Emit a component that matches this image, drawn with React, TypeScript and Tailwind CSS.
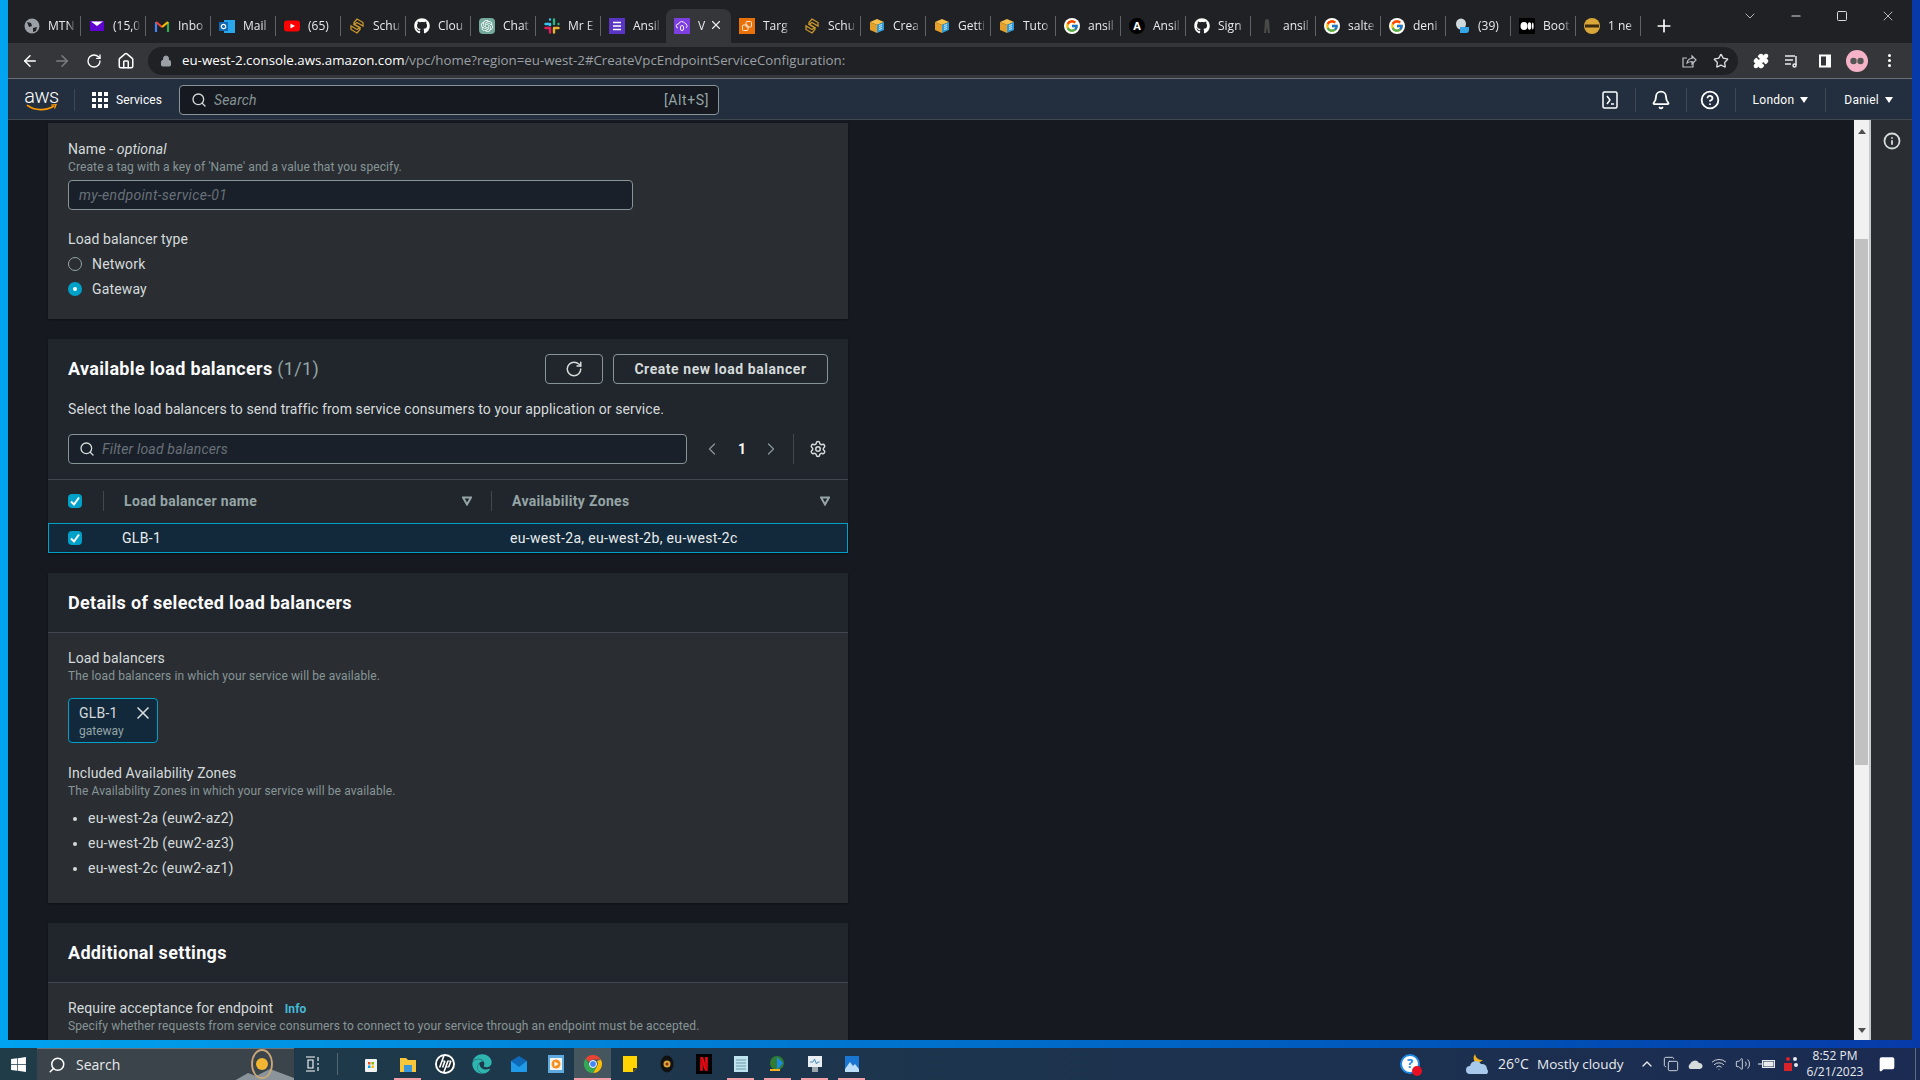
import {
  ArrowLeft,
  ArrowRight,
  Bell,
  ChevronDown,
  ChevronLeft,
  ChevronRight,
  ChevronUp,
  CircleHelp,
  Copy,
  House,
  Info,
  Lock,
  MessageSquare,
  Minus,
  Plus,
  Puzzle,
  RotateCw,
  Search,
  Settings,
  Square,
  Star,
  Volume2,
  Wifi,
  X,
} from 'lucide-react';
import { FaGithub, FaWindows, FaEdge } from 'react-icons/fa';
import { FcGoogle } from 'react-icons/fc';
import { SiHp, SiNetflix, SiOpenai } from 'react-icons/si';

const Schu = () => (
  <svg viewBox="0 0 16 16" className="w-4 h-4" fill="none" stroke="#c8962e" strokeWidth="1.3">
    <path d="M8 1 14 4.500V8L8 4.500 5 6.500 11 10V11.500L8 15 2 11.500V8L8 11.500 11 9.500 5 6V4.500Z" />
  </svg>
);

const Cube = () => (
  <svg viewBox="0 0 16 16" className="w-4 h-4">
    <path d="M1 4 8 1l7 3-7 3z" fill="#f7c04a" />
    <path d="M1 4l7 3v8l-7-3z" fill="#e5a02b" />
    <path d="M8 7l7-3v8l-7 3z" fill="#2f9bd9" />
    <path d="M10 7.500l3-1M10 9.500l3-1M10 11.500l3-1" stroke="#fff" strokeWidth="0.8" />
  </svg>
);

const Google = () => (
  <span className="w-4 h-4 rounded-full bg-white flex items-center justify-center">
    <FcGoogle className="w-3.5 h-3.5" />
  </span>
);

const Github = () => <FaGithub className="w-4 h-4 text-white" />;

const tabs = [
  {
    label: 'MTN',
    icon: (
      <svg viewBox="0 0 16 16" className="w-4 h-4">
        <circle cx="8" cy="8" r="7.500" fill="#9aa0a6" />
        <path d="M3 4l4 1 1 3-3 1zM9 10l4-1-1 4-3 1z" fill="#202124" />
      </svg>
    ),
  },
  {
    label: '(15,0',
    icon: (
      <svg viewBox="0 0 16 16" className="w-4 h-4">
        <rect x="1" y="3" width="14" height="10" fill="#5f01d1" />
        <path d="M2 3.500h12L8 8z" fill="#fff" />
      </svg>
    ),
  },
  {
    label: 'Inbo',
    icon: (
      <svg viewBox="0 0 16 16" className="w-4 h-4" fill="none" strokeWidth="2.200">
        <path d="M2 14V4" stroke="#4285f4" />
        <path d="M14 14V4" stroke="#34a853" />
        <path d="M2 4l6 5" stroke="#ea4335" />
        <path d="M8 9l6-5" stroke="#fbbc04" />
      </svg>
    ),
  },
  {
    label: 'Mail',
    icon: (
      <svg viewBox="0 0 16 16" className="w-4 h-4">
        <rect x="5" y="2" width="11" height="13" fill="#28a8ea" />
        <rect x="0" y="4" width="9" height="9" fill="#0f67b5" />
        <circle cx="4.500" cy="8.500" r="2.200" fill="none" stroke="#fff" strokeWidth="1.200" />
      </svg>
    ),
  },
  {
    label: '(65)',
    icon: (
      <svg viewBox="0 0 16 16" className="w-4 h-4">
        <rect x="0" y="2.500" width="16" height="11" rx="3" fill="#f00" />
        <path d="M6.500 5.500v5L11 8z" fill="#fff" />
      </svg>
    ),
  },
  { label: 'Schu', icon: <Schu /> },
  { label: 'Clou', icon: <Github /> },
  {
    label: 'Chat',
    icon: (
      <span className="w-4 h-4 rounded bg-[#74aa9c] flex items-center justify-center">
        <SiOpenai className="w-3 h-3 text-white" />
      </span>
    ),
  },
  {
    label: 'Mr E',
    icon: (
      <svg viewBox="0 0 16 16" className="w-4 h-4" strokeWidth="2.400" strokeLinecap="round">
        <path d="M6 7V6.500M6 1.500h0" stroke="#36c5f0" />
        <path d="M1.500 6H6" stroke="#36c5f0" />
        <path d="M10 6V1.500M14.500 6h0" stroke="#2eb67d" />
        <path d="M10 10v4.500M14.500 10H10" stroke="#ecb22e" />
        <path d="M6 10v4.500M1.500 10H6" stroke="#e01e5a" />
      </svg>
    ),
  },
  {
    label: 'Ansil',
    icon: (
      <svg viewBox="0 0 16 16" className="w-4 h-4">
        <rect width="16" height="16" fill="#5a35c4" />
        <path d="M4 4.500h8M4 8h8M4 11.500h8" stroke="#fff" strokeWidth="1.500" />
      </svg>
    ),
  },
  {
    label: 'V',
    active: true,
    icon: (
      <svg viewBox="0 0 16 16" className="w-4 h-4" fill="none">
        <rect width="16" height="16" fill="#7d3fe0" />
        <path d="M4 10a2 2 0 0 1 .5-4 3.500 3.500 0 0 1 6.500-.5 2.500 2.500 0 0 1 1 4.500" stroke="#fff" strokeWidth="0.900" />
        <rect x="6.500" y="7.500" width="3" height="5" rx="1.500" stroke="#fff" strokeWidth="0.900" />
      </svg>
    ),
  },
  {
    label: 'Targ',
    icon: (
      <svg viewBox="0 0 16 16" className="w-4 h-4" fill="none">
        <rect width="16" height="16" fill="#e8710a" />
        <rect x="7" y="3.500" width="5.500" height="5.500" rx="1" stroke="#fff" strokeWidth="0.800" />
        <rect x="3.500" y="7" width="5.500" height="5.500" rx="1" stroke="#fff" strokeWidth="0.800" />
      </svg>
    ),
  },
  { label: 'Schu', icon: <Schu /> },
  { label: 'Crea', icon: <Cube /> },
  { label: 'Getti', icon: <Cube /> },
  { label: 'Tuto', icon: <Cube /> },
  { label: 'ansil', icon: <Google /> },
  {
    label: 'Ansil',
    icon: (
      <span className="w-4 h-4 rounded-full bg-black text-white text-[11px] leading-4 text-center font-bold">A</span>
    ),
  },
  { label: 'Sign', icon: <Github /> },
  {
    label: 'ansil',
    icon: (
      <svg viewBox="0 0 16 16" className="w-4 h-4">
        <path d="M5 15 6 3a2 2 0 0 1 4 0l1 12H9L8 9l-1 6z" fill="#4a4a48" />
      </svg>
    ),
  },
  { label: 'salte', icon: <Google /> },
  { label: 'deni', icon: <Google /> },
  {
    label: '(39)',
    icon: (
      <svg viewBox="0 0 16 16" className="w-4 h-4">
        <ellipse cx="7" cy="6" rx="5" ry="5.500" fill="#cfd8dc" />
        <path d="M6 9h9v3a3 3 0 0 1-3 3H6z" fill="#35a7e8" />
      </svg>
    ),
  },
  {
    label: 'Boot',
    icon: (
      <svg viewBox="0 0 16 16" className="w-4 h-4">
        <rect width="16" height="16" fill="#000" />
        <ellipse cx="5" cy="8" rx="3.500" ry="4" fill="#fff" />
        <ellipse cx="10.500" cy="8" rx="1.800" ry="3.800" fill="#fff" />
        <ellipse cx="13.800" cy="8" rx="0.800" ry="3.400" fill="#fff" />
      </svg>
    ),
  },
  {
    label: '1 ne',
    icon: (
      <svg viewBox="0 0 16 16" className="w-4 h-4">
        <circle cx="8" cy="8" r="8" fill="#d9a63a" />
        <rect x="1" y="6.500" width="14" height="3" fill="#3a2a12" />
      </svg>
    ),
  },
];

const TabStrip = () => (
  <div className="h-[43px] bg-[#202124] flex items-end pl-2 shrink-0">
    {tabs.map((tab, i) => {
      const hideSep = tab.active || tabs[i + 1]?.active || tabs[i - 1]?.active;
      return (
        <div
          key={i}
          className={`relative w-[65px] h-[34px] pl-2 pb-[1px] flex items-center gap-2 shrink-0 ${
            tab.active ? 'bg-[#35363a] rounded-t-lg' : ''
          }`}
        >
          <span className="w-4 h-4 shrink-0 flex items-center justify-center">{tab.icon}</span>
          <span className="w-7 overflow-hidden whitespace-nowrap text-xs text-[#e8eaed] [mask-image:linear-gradient(to_right,black_70%,transparent)]">
            {tab.label}
          </span>
          {tab.active && <X className="absolute right-[8px] top-[9px] w-3.5 h-3.5 text-[#e8eaed]" />}
          {!hideSep && !tab.active && <span className="absolute right-0 top-[7px] h-5 w-px bg-[#5f6368]" />}
        </div>
      );
    })}
    <Plus className="w-5 h-5 ml-[13px] mb-[7px] text-white" />
    <div className="ml-auto self-start flex items-center h-[31px] text-[#dadce0]">
      <ChevronDown className="w-4 h-4 mr-[31px]" strokeWidth={1.2} />
      <Minus className="w-3.5 h-3.5 mr-[33px]" />
      <Square className="w-3 h-3 mr-[32px]" />
      <X className="w-4 h-4 mr-[16px]" strokeWidth={1.2} />
    </div>
  </div>
);

const Toolbar = () => (
  <div className="h-[36px] bg-[#35363a] border-b border-[#6b6e73] flex items-center shrink-0 pl-[13px]">
    <ArrowLeft className="w-[18px] h-[18px] text-white" />
    <ArrowRight className="w-[18px] h-[18px] text-[#7c7e82] ml-[14px]" />
    <RotateCw className="w-4 h-4 text-white ml-[15px]" />
    <House className="w-[18px] h-[18px] text-white ml-[15px]" />
    <div className="ml-[13px] w-[1590px] h-[28px] rounded-full bg-[#202124] flex items-center pl-[12px] pr-[9px]">
      <Lock className="w-3 h-3 text-[#9aa0a6]" fill="#9aa0a6" />
      <span className="ml-[10px] text-[13.3px] text-white whitespace-nowrap">
        eu-west-2.console.aws.amazon.com
        <span className="text-[#9aa0a6]">/vpc/home?region=eu-west-2#CreateVpcEndpointServiceConfiguration:</span>
      </span>
      <svg viewBox="0 0 16 16" className="w-4 h-4 ml-auto" fill="none" stroke="#bdc1c6" strokeWidth="1.200">
        <path d="M12 8.500V14H2V5h4" />
        <path d="M6 10c.5-3 2.500-4.500 5-4.500V3l4 4-4 4V8.500c-2 0-3.500.5-5 1.500z" />
      </svg>
      <Star className="w-4 h-4 text-[#dadce0] ml-4" />
    </div>
    <Puzzle className="w-4 h-4 text-white ml-[15px]" fill="#fff" />
    <svg viewBox="0 0 16 16" className="w-4 h-4 ml-[15px]" fill="none" stroke="#e8eaed" strokeWidth="1.500">
      <path d="M1 3h10M1 7h8M1 11h6M12 3v9" />
      <circle cx="10.500" cy="12.500" r="1.500" />
    </svg>
    <svg viewBox="0 0 16 16" className="w-4 h-4 ml-[17px]">
      <rect x="2" y="1.500" width="12" height="13" fill="#fff" />
      <rect x="4" y="3.500" width="5" height="9" fill="#35363a" />
    </svg>
    <svg viewBox="0 0 22 22" className="w-[22px] h-[22px] ml-[13px]">
      <circle cx="11" cy="11" r="11" fill="#f4b3c6" />
      <circle cx="7.500" cy="11" r="3.200" fill="#555" />
      <circle cx="14.500" cy="11" r="3.200" fill="#555" />
    </svg>
    <div className="ml-[20px] flex flex-col gap-[2px]">
      <span className="w-[3px] h-[3px] rounded-full bg-white" />
      <span className="w-[3px] h-[3px] rounded-full bg-white" />
      <span className="w-[3px] h-[3px] rounded-full bg-white" />
    </div>
  </div>
);

const Caret = () => (
  <svg viewBox="0 0 8 6" className="w-2 h-1.5 ml-1.5" fill="#fff">
    <path d="M0 0h8L4 6z" />
  </svg>
);

const AwsNav = () => (
  <div className="h-[41px] bg-[#232f3e] border-b border-[#414750] flex items-center shrink-0 pl-[18px] pt-[1px] text-white">
    <div className="w-[31px] flex flex-col items-center">
      <span className="text-[20px] leading-[16px] font-light -tracking-[0.5px]">aws</span>
      <svg viewBox="0 0 32 8" className="w-[31px] h-2">
        <path d="M1 1c8 6 20 6 28 1" fill="none" stroke="#ff9900" strokeWidth="1.800" />
        <path d="M26 1l5-.5-1.500 4" fill="none" stroke="#ff9900" strokeWidth="1.300" />
      </svg>
    </div>
    <span className="ml-[17px] h-[22px] w-px bg-[#414750]" />
    <div className="ml-[17px] grid grid-cols-3 gap-[2px]">
      {Array.from({ length: 9 }).map((_, i) => (
        <span key={i} className="w-1 h-1 bg-white" />
      ))}
    </div>
    <span className="ml-[8px] text-xs tracking-[0.1px]">Services</span>
    <div className="ml-[17px] w-[540px] h-[30px] rounded-sm bg-[#16191f] border border-[#879596] flex items-center pl-[11px] pr-[9px]">
      <Search className="w-4 h-4 text-[#d5dbdb]" />
      <span className="ml-[7px] text-sm italic text-[#879596] tracking-[0.15px]">Search</span>
      <span className="ml-auto text-sm text-[#95a5a6] tracking-[0.6px]">[Alt+S]</span>
    </div>
    <div className="ml-auto flex items-center h-full">
      <svg viewBox="0 0 16 18" className="w-4 h-[18px]" fill="none" stroke="#fff" strokeWidth="1.500">
        <rect x="1" y="1" width="14" height="16" rx="1.500" />
        <path d="M5 5l3 4-3 4M9 13h3" />
      </svg>
      <span className="ml-[17px] h-[24px] w-px bg-[#414750]" />
      <Bell className="ml-[15px] w-5 h-5" strokeWidth={2.200} />
      <span className="ml-[15px] h-[24px] w-px bg-[#414750]" />
      <CircleHelp className="ml-[13px] w-5 h-5" strokeWidth={2.200} />
      <span className="ml-[15px] h-[24px] w-px bg-[#414750]" />
      <span className="ml-[17px] text-xs tracking-[0.25px]">London</span>
      <Caret />
      <span className="ml-[17px] h-[24px] w-px bg-[#414750]" />
      <span className="ml-[18px] text-xs tracking-[0.25px]">Daniel</span>
      <Caret />
      <span className="w-[19px]" />
    </div>
  </div>
);

const Panel = ({ children, className = '' }: { children: React.ReactNode; className?: string }) => (
  <div className={`w-[800px] bg-[#2a2e33] shadow-[0_1px_2px_rgba(0,0,0,0.4)] shrink-0 ${className}`}>{children}</div>
);

const PanelHeader = ({ title }: { title: string }) => (
  <div className="h-[60px] bg-[#21252c] border-b border-[#414750] px-5 flex items-center">
    <h2 className="text-lg font-bold text-[#fafafa] tracking-[0.32px]">{title}</h2>
  </div>
);

const Label = ({ children }: { children: React.ReactNode }) => (
  <div className="text-sm leading-[22px] text-[#d5dbdb] tracking-[0.1px]">{children}</div>
);

const Hint = ({ children }: { children: React.ReactNode }) => (
  <div className="text-xs leading-[15px] text-[#879596] tracking-[0.11px] whitespace-nowrap">{children}</div>
);

const Radio = ({ label, checked }: { label: string; checked?: boolean }) => (
  <div className="h-5 flex items-center gap-[10px]">
    {checked ? (
      <span className="w-3.5 h-3.5 rounded-full bg-[#00a1c9] flex items-center justify-center">
        <span className="w-1 h-1 rounded-full bg-white" />
      </span>
    ) : (
      <span className="w-3.5 h-3.5 rounded-full border border-[#95a5a6]" />
    )}
    <span className="text-sm text-[#d5dbdb] tracking-[0.15px]">{label}</span>
  </div>
);

const Check = () => (
  <span className="w-3.5 h-3.5 rounded-sm bg-[#00a1c9] flex items-center justify-center shrink-0">
    <svg viewBox="0 0 14 14" className="w-3.5 h-3.5" fill="none" stroke="#fff" strokeWidth="2">
      <path d="M3 7.500 6 10.500 11 3.500" />
    </svg>
  </span>
);

const SortIcon = () => (
  <svg viewBox="0 0 10 10" className="w-2.5 h-2.5" fill="none" stroke="#95a5a6" strokeWidth="2">
    <path d="M1 1.500h8L5 8.500z" />
  </svg>
);

const Scrollbar = () => (
  <div className="w-[17px] bg-[#f1f1f1] border-r-2 border-[#c8c8c8] shrink-0 flex flex-col items-center">
    <svg viewBox="0 0 8 5" className="w-2 h-[5px] mt-[9px] shrink-0" fill="#505050">
      <path d="M4 0l4 5H0z" />
    </svg>
    <div className="w-[13px] h-[526px] mt-[105px] bg-[#c1c1c1] shrink-0" />
    <svg viewBox="0 0 8 5" className="w-2 h-[5px] mt-auto mb-[7px] shrink-0" fill="#505050">
      <path d="M0 0h8L4 5z" />
    </svg>
  </div>
);

const Main = () => (
  <div className="flex-1 flex min-h-0 bg-[#16191f]">
    <div className="flex-1 overflow-hidden pl-10 pt-[3px] flex flex-col gap-5">
      <Panel className="h-[196px] pl-5 pt-[15px]">
        <Label>
          Name - <i>optional</i>
        </Label>
        <Hint>Create a tag with a key of 'Name' and a value that you specify.</Hint>
        <div className="mt-[5px] w-[565px] h-[30px] pb-[1px] bg-[#1a2029] border border-[#879596] rounded-sm flex items-center px-[10px] text-sm italic text-[#687078] tracking-[0.33px]">
          my-endpoint-service-01
        </div>
        <div className="mt-[18px]">
          <Label>Load balancer type</Label>
        </div>
        <div className="mt-[4px] flex flex-col gap-[5px]">
          <Radio label="Network" />
          <Radio label="Gateway" checked />
        </div>
      </Panel>

      <Panel className="bg-[#21252c]">
        <div className="pt-[15px] px-5 flex items-center">
          <h2 className="text-lg font-bold text-[#fafafa] tracking-[0.32px]">
            Available load balancers <span className="font-normal text-[#95a5a6]">(1/1)</span>
          </h2>
          <div className="ml-auto w-[58px] h-[30px] border border-[#879596] rounded-sm flex items-center justify-center">
            <RotateCw className="w-[18px] h-[18px] text-[#d5dbdb]" />
          </div>
          <div className="ml-[10px] w-[215px] h-[30px] border border-[#879596] rounded-sm flex items-center justify-center text-sm font-bold text-[#d5dbdb] tracking-[0.55px]">
            Create new load balancer
          </div>
        </div>
        <div className="mt-[14px] px-5 text-sm leading-[22px] text-[#d5dbdb] tracking-[0.09px]">
          Select the load balancers to send traffic from service consumers to your application or service.
        </div>
        <div className="mt-[14px] px-5 flex items-center h-[30px]">
          <div className="w-[619px] h-full bg-[#1a2029] border border-[#879596] rounded-sm flex items-center pl-[10px]">
            <Search className="w-4 h-4 text-[#d5dbdb]" />
            <span className="ml-[7px] text-sm italic text-[#687078] tracking-[0.17px]">Filter load balancers</span>
          </div>
          <ChevronLeft className="ml-[15px] w-5 h-5 text-[#879596]" strokeWidth={1.500} />
          <span className="ml-[16px] w-2 text-sm font-bold text-[#fafafa]">1</span>
          <ChevronRight className="ml-[15px] w-5 h-5 text-[#879596]" strokeWidth={1.500} />
          <span className="ml-[12px] h-full w-px bg-[#414750]" />
          <Settings className="ml-[15px] w-[18px] h-[18px] text-[#d5dbdb]" />
        </div>
        <div className="mt-[15px] h-[44px] pb-[2px] border-t border-[#414750] flex items-center pl-5 text-sm font-bold text-[#95a5a6] tracking-[0.33px]">
          <Check />
          <span className="ml-[21px] w-px h-5 bg-[#414750]" />
          <span className="ml-5 w-[338px]">Load balancer name</span>
          <SortIcon />
          <span className="ml-[19px] w-px h-5 bg-[#414750]" />
          <span className="ml-5 w-[308px]">Availability Zones</span>
          <SortIcon />
        </div>
        <div className="h-[30px] bg-[#12293b] border border-[#00a1c9] flex items-center pl-[19px] text-sm text-[#eaeded] tracking-[0.32px]">
          <Check />
          <span className="ml-[40px] w-[388px]">GLB-1</span>
          <span>eu-west-2a, eu-west-2b, eu-west-2c</span>
        </div>
      </Panel>

      <Panel className="h-[330px]">
        <PanelHeader title="Details of selected load balancers" />
        <div className="pl-5 pt-[14px]">
          <Label>Load balancers</Label>
          <Hint>The load balancers in which your service will be available.</Hint>
          <div className="mt-[14px] w-[90px] h-[45px] bg-[#12293b] border border-[#00a1c9] rounded-sm pl-[10px] pt-[3px] relative">
            <div className="text-sm leading-[22px] text-[#d5dbdb] tracking-[0.2px]">GLB-1</div>
            <div className="text-xs leading-[15px] text-[#95a5a6]">gateway</div>
            <X className="absolute right-[4px] top-[4px] w-5 h-5 text-[#d5dbdb]" />
          </div>
          <div className="mt-[19px]">
            <Label>Included Availability Zones</Label>
          </div>
          <Hint>The Availability Zones in which your service will be available.</Hint>
          <ul className="mt-[7px] list-disc pl-5 text-sm text-[#d5dbdb] tracking-[0.23px]">
            <li className="h-[25px] leading-[25px]">eu-west-2a (euw2-az2)</li>
            <li className="h-[25px] leading-[25px]">eu-west-2b (euw2-az3)</li>
            <li className="h-[25px] leading-[25px]">eu-west-2c (euw2-az1)</li>
          </ul>
        </div>
      </Panel>

      <Panel className="h-[200px]">
        <PanelHeader title="Additional settings" />
        <div className="pl-5 pt-[14px]">
          <Label>
            Require acceptance for endpoint <b className="ml-2 text-xs text-[#44b9d6]">Info</b>
          </Label>
          <Hint>Specify whether requests from service consumers to connect to your service through an endpoint must be accepted.</Hint>
        </div>
      </Panel>
    </div>
    <Scrollbar />
    <div className="w-[41px] bg-[#2a2e33] shrink-0 flex justify-center pt-3">
      <Info className="w-[18px] h-[18px] text-[#d5dbdb]" strokeWidth={2.400} />
    </div>
  </div>
);

const Chrome = () => (
  <svg viewBox="0 0 20 20" className="w-5 h-5">
    <path d="M10 1a9 9 0 0 1 7.800 4.500H10a4.500 4.500 0 0 0-4 2.500L2.800 4.400A9 9 0 0 1 10 1z" fill="#ea4335" />
    <path d="M17.800 5.500A9 9 0 0 1 10 19l3.900-6.800A4.500 4.500 0 0 0 14 7z" fill="#fbbc04" />
    <path d="M10 19A9 9 0 0 1 2.800 4.400L6 10a4.500 4.500 0 0 0 7.900 2.200z" fill="#34a853" />
    <circle cx="10" cy="10" r="3.500" fill="#4285f4" stroke="#fff" />
  </svg>
);

const taskIcons: { node: React.ReactNode; line?: boolean; active?: boolean }[] = [
  {
    node: (
      <svg viewBox="0 0 20 20" className="w-5 h-5">
        <rect x="4" y="5" width="12" height="13" rx="1" fill="#f3f3f3" />
        <rect x="7" y="8" width="2.500" height="2.500" fill="#f25022" />
        <rect x="10.500" y="8" width="2.500" height="2.500" fill="#7fba00" />
        <rect x="7" y="11.500" width="2.500" height="2.500" fill="#00a4ef" />
        <rect x="10.500" y="11.500" width="2.500" height="2.500" fill="#ffb900" />
      </svg>
    ),
  },
  {
    line: true,
    node: (
      <svg viewBox="0 0 20 20" className="w-5 h-5">
        <path d="M2 4h6l2 2h8v12H2z" fill="#f9c83a" />
        <rect x="6" y="11" width="8" height="7" fill="#3a96dd" />
      </svg>
    ),
  },
  {
    node: (
      <span className="w-5 h-5 rounded-full bg-white flex items-center justify-center">
        <SiHp className="w-4 h-4 text-[#1a2a35]" />
      </span>
    ),
  },
  { node: <FaEdge className="w-5 h-5 text-[#2fb5b0]" /> },
  {
    node: (
      <svg viewBox="0 0 20 20" className="w-5 h-5">
        <rect x="2" y="7" width="16" height="11" fill="#1f9bea" />
        <path d="M2 7l8-5 8 5-8 6z" fill="#0e6ab8" />
      </svg>
    ),
  },
  {
    node: (
      <svg viewBox="0 0 20 20" className="w-5 h-5">
        <rect x="2" y="1" width="16" height="18" fill="#5ea9dd" />
        <rect x="4" y="4" width="12" height="12" fill="#f5f5f5" />
        <circle cx="10" cy="10" r="4.500" fill="#f5901e" />
        <path d="M8.500 7.500v5l4-2.500z" fill="#fff" />
      </svg>
    ),
  },
  { active: true, line: true, node: <Chrome /> },
  {
    node: (
      <svg viewBox="0 0 20 20" className="w-5 h-5">
        <path d="M3 2h14v12l-4 4H3z" fill="#ffd400" />
        <path d="M13 18v-4h4z" fill="#3a3a1a" />
      </svg>
    ),
  },
  {
    node: (
      <svg viewBox="0 0 20 20" className="w-5 h-5">
        <ellipse cx="10" cy="10" rx="6.500" ry="8.500" fill="#111" />
        <circle cx="10" cy="10" r="3.500" fill="#d9a53a" />
        <circle cx="10" cy="10" r="1.500" fill="#8a2a10" />
      </svg>
    ),
  },
  {
    node: (
      <span className="w-4 h-5 bg-black flex items-center justify-center">
        <SiNetflix className="w-3.5 h-3.5 text-[#e50914]" />
      </span>
    ),
  },
  {
    line: true,
    node: (
      <svg viewBox="0 0 20 20" className="w-5 h-5">
        <rect x="3" y="2" width="14" height="16" fill="#bfe3ef" />
        <path d="M5 6h10M5 9h10M5 12h10M5 15h10" stroke="#6c97a8" />
      </svg>
    ),
  },
  {
    line: true,
    node: (
      <svg viewBox="0 0 20 20" className="w-5 h-5">
        <circle cx="9" cy="9" r="7" fill="#2f7d32" />
        <path d="M9 3l6 6-6 7z" fill="#1e88e5" />
        <path d="M2 15h10v2H2z" fill="#f5b21a" />
      </svg>
    ),
  },
  {
    line: true,
    node: (
      <svg viewBox="0 0 20 20" className="w-5 h-5">
        <rect x="3" y="2" width="14" height="11" fill="#e8eef2" />
        <path d="M5 8h3l1.500-3 2 5 1-2h2" fill="none" stroke="#4a90c2" />
        <rect x="7" y="13" width="6" height="5" fill="#9aa7ad" />
      </svg>
    ),
  },
  {
    line: true,
    node: (
      <svg viewBox="0 0 20 20" className="w-5 h-5">
        <rect x="3" y="2" width="14" height="16" fill="#1976d2" />
        <path d="M3 15l5-7 3 4 2-2 4 5v3H3z" fill="#bbdefb" />
      </svg>
    ),
  },
];

const Taskbar = () => (
  <div className="h-8 bg-gradient-to-r from-[#1f3c48] to-[#1b2b52] flex items-center shrink-0 [font-family:'Open_Sans',sans-serif]">
    <div className="w-[37px] flex justify-center">
      <FaWindows className="w-[17px] h-[17px] text-white" />
    </div>
    <div className="w-[257px] h-full bg-[#3a444a] border-t border-[#6c7478] flex items-center pl-[11px] overflow-hidden">
      <Search className="w-[18px] h-[18px] text-white -scale-x-100" />
      <span className="ml-[10px] text-sm text-[#e8eaed]">Search</span>
      <svg viewBox="0 0 60 32" className="ml-auto w-[60px] h-8 shrink-0">
        <path d="M0 32l14-8 8 3 14-7 24 9v3z" fill="#8a949a" />
        <ellipse cx="28" cy="15" rx="10" ry="14" fill="none" stroke="#c9a77a" strokeWidth="1.800" />
        <circle cx="28" cy="15" r="6" fill="#f2b632" />
      </svg>
    </div>
    <div className="w-[37px] flex justify-center">
      <svg viewBox="0 0 16 16" className="w-4 h-4" fill="none" stroke="#fff" strokeWidth="1.100">
        <path d="M1 1h9M1 15h9M3 4h5v8H3zM13 1v4M13 7v2M13 11v4" />
      </svg>
    </div>
    <span className="ml-[6px] h-[22px] w-px bg-[#56666e]" />
    <div className="ml-[14px] flex h-full">
      {taskIcons.map((t, i) => (
        <div
          key={i}
          className={`relative w-[37px] h-full flex items-center justify-center ${t.active ? 'bg-[#46565e]' : ''}`}
        >
          {t.node}
          {t.line && (
            <span
              className={`absolute bottom-0 h-[2px] bg-[#f4a0a8] ${t.active ? 'left-0 right-0' : 'left-[5px] right-[5px]'}`}
            />
          )}
        </div>
      ))}
    </div>
    <div className="ml-[530px] w-5 h-5 rounded-full bg-white border-2 border-[#1e88e5] flex items-center justify-center text-[#1e88e5] text-[13px] font-bold relative">
      ?
      <span className="absolute -right-1 -bottom-1 w-2.5 h-2.5 rounded-full bg-[#e81123]" />
    </div>
    <svg viewBox="0 0 26 24" className="ml-[45px] w-[26px] h-6">
      <path d="M10 2a7 7 0 0 0 2 10l6-4a7 7 0 0 1-8-6z" fill="#f5b21a" />
      <path d="M5 22a4 4 0 0 1 0-8 6 6 0 0 1 11-2 5 5 0 0 1 6 5 4 4 0 0 1 0 5z" fill="#a8c9ec" />
    </svg>
    <span className="ml-[7px] w-[39px] text-sm text-[#e8eaed]">26°C</span>
    <span className="w-[98px] text-[13.5px] whitespace-nowrap text-[#e8eaed]">Mostly cloudy</span>
    <div className="flex text-[#e8eaed]">
      <div className="w-6 flex justify-center">
        <ChevronUp className="w-4 h-4" />
      </div>
      <div className="w-6 flex justify-center">
        <Copy className="w-4 h-4" strokeWidth={1.300} />
      </div>
      <div className="w-6 flex justify-center items-center">
        <svg viewBox="0 0 16 10" className="w-4 h-2.5" fill="#d5dbdb">
          <path d="M3 10a3 3 0 0 1 0-5 5 5 0 0 1 9-1 3 3 0 0 1 1 6z" />
        </svg>
      </div>
      <div className="w-6 flex justify-center">
        <Wifi className="w-4 h-4" strokeWidth={1.300} />
      </div>
      <div className="w-6 flex justify-center">
        <Volume2 className="w-4 h-4" strokeWidth={1.300} />
      </div>
      <div className="w-6 flex justify-center items-center">
        <svg viewBox="0 0 18 10" className="w-[18px] h-2.5" fill="none" stroke="#e8eaed">
          <rect x="4.500" y="1.500" width="12" height="7" />
          <rect x="6" y="3" width="9" height="4" fill="#e8eaed" />
          <path d="M0 5h4" />
        </svg>
      </div>
      <div className="w-6 flex justify-center items-center">
        <svg viewBox="0 0 16 16" className="w-4 h-4">
          <rect x="1" y="7" width="8" height="8" fill="#d8232a" />
          <circle cx="5" cy="3" r="2" fill="#d8232a" />
          <circle cx="12" cy="3" r="2" fill="#e8eaed" />
          <circle cx="13" cy="9" r="2" fill="#e8eaed" />
        </svg>
      </div>
    </div>
    <div className="w-16 text-center text-xs leading-4 text-[#e8eaed]">
      <div>8:52 PM</div>
      <div>6/21/2023</div>
    </div>
    <div className="w-10 flex justify-center">
      <MessageSquare className="w-4 h-4 text-white" fill="#fff" />
    </div>
    <span className="ml-2 h-full w-px bg-[#5a6a80]" />
  </div>
);

export default function App() {
  return (
    <div className="w-[1920px] h-[1080px] overflow-hidden flex flex-col">
      <div className="flex-1 min-h-0 px-2 pb-2 bg-gradient-to-r from-[#00a3ef] to-[#073aa8] flex flex-col">
        <div className="flex flex-col flex-1 min-h-0 [font-family:'Open_Sans',sans-serif]">
          <TabStrip />
          <Toolbar />
          <div className="flex-1 min-h-0 flex flex-col [font-family:'Roboto',sans-serif]">
            <AwsNav />
            <Main />
          </div>
        </div>
      </div>
      <Taskbar />
    </div>
  );
}
